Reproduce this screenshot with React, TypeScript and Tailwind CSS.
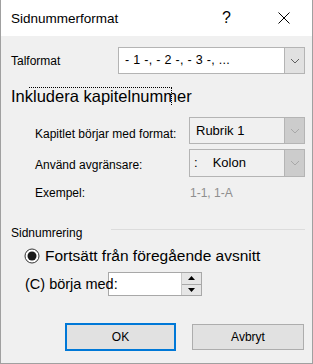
import React from 'react'

function Chevron({ color = '#606060' }: { color?: string }) {
  return (
    <svg width="10" height="6" viewBox="0 0 10 6" fill="none">
      <path d="M1 1 L5 5 L9 1" stroke={color} strokeWidth="1" />
    </svg>
  )
}

function Select({
  width,
  height,
  bg,
  btnBg,
  chevron,
  children,
}: {
  width: string
  height: string
  bg: string
  btnBg: string
  chevron: string
  children: React.ReactNode
}) {
  return (
    <div className={`flex border border-[#b4b4b4] ${width} ${height} ${bg}`}>
      <div className="flex-1 flex items-center">{children}</div>
      <div className={`w-[20px] flex items-center justify-center border-l border-[#b4b4b4] ${btnBg}`}>
        <Chevron color={chevron} />
      </div>
    </div>
  )
}

export default function App() {
  return (
    <div
      className="w-[313px] h-[364px] bg-[#f0f0f0] border-x border-b border-[#a0a0a0] flex flex-col text-black"
      style={{ fontFamily: '"Liberation Sans", Arial, sans-serif' }}
    >
      {/* Title bar */}
      <div className="h-[36px] bg-white flex items-center pl-[10px] shrink-0">
        <span className="text-[13.5px] leading-none pt-[1px]">Sidnummerformat</span>
        <span className="ml-auto text-[16px] leading-none mr-[47px]">?</span>
        <svg width="12" height="12" viewBox="0 0 12 12" className="mr-[22px]">
          <path d="M0.5 0.5 L11.5 11.5 M11.5 0.5 L0.5 11.5" stroke="#000" strokeWidth="1" />
        </svg>
      </div>

      <div className="flex flex-col">
        {/* Talformat */}
        <div className="mt-[11px] h-[27px] flex items-center">
          <span className="pl-[10px] w-[117px] text-[12px]">Talformat</span>
          <Select width="w-[187px]" height="h-[27px]" bg="bg-white" btnBg="bg-[#e1e1e1]" chevron="#606060">
            <span className="pl-[6px] text-[12.5px] tracking-[0.3px]">- 1 -, - 2 -, - 3 -, ...</span>
          </Select>
        </div>

        {/* Inkludera kapitelnummer */}
        <div className="relative mt-[13px] h-[19px]">
          <span className="pl-[10px] text-[16.5px] leading-[19px] block">Inkludera kapitelnummer</span>
          <div className="absolute left-[28px] top-0 w-[143px] h-[18px] border-t border-r border-dotted border-black" />
        </div>

        <div className="mt-[11px] h-[27px] flex items-center">
          <span className="pl-[34px] w-[188px] text-[12px] pt-[6px]">Kapitlet börjar med format:</span>
          <Select width="w-[116px]" height="h-[27px]" bg="bg-[#f0f0f0]" btnBg="bg-[#cccccc]" chevron="#a8a8a8">
            <span className="pl-[6px] text-[13px]">Rubrik 1</span>
          </Select>
        </div>

        <div className="mt-[5px] h-[28px] flex items-center">
          <span className="pl-[34px] w-[188px] text-[12px] pt-[4px]">Använd avgränsare:</span>
          <Select width="w-[116px]" height="h-[28px]" bg="bg-[#f0f0f0]" btnBg="bg-[#cccccc]" chevron="#a8a8a8">
            <span className="pl-[4px] text-[13px]">:</span>
            <span className="pl-[15px] text-[13px]">Kolon</span>
          </Select>
        </div>

        <div className="mt-[8px] h-[16px] flex items-center">
          <span className="pl-[34px] w-[189px] text-[12px]">Exempel:</span>
          <span className="text-[12px] text-[#8e8e8e]">1-1, 1-A</span>
        </div>

        {/* Sidnumrering */}
        <div className="mt-[24px] h-[16px] flex items-center">
          <span className="pl-[10px] text-[12px] w-[110px]">Sidnumrering</span>
          <div className="w-[194px] h-px bg-[#dcdcdc] -mt-[8px]" />
        </div>

        <div className="mt-[6px] h-[18px] flex items-center">
          <svg width="16" height="16" viewBox="0 0 16 16" className="ml-[23px]">
            <circle cx="8" cy="8" r="7" fill="#fff" stroke="#333" strokeWidth="1" />
            <circle cx="8" cy="8" r="4.5" fill="#1a1a1a" />
          </svg>
          <span className="ml-[5px] text-[15.5px]">Fortsätt från föregående avsnitt</span>
        </div>

        <div className="mt-[7px] h-[24px] relative flex items-center">
          <div className="ml-[107px] w-[94px] h-[24px] bg-white border border-[#a8a8a8] flex justify-end">
            <div className="w-[20px] flex flex-col border-l border-[#c8c8c8]">
              <div className="flex-1 bg-[#e6e6e6] flex items-center justify-center border-b border-[#a8a8a8]">
                <svg width="7" height="4" viewBox="0 0 7 4">
                  <path d="M0 4 L3.5 0 L7 4 Z" fill="#000" />
                </svg>
              </div>
              <div className="flex-1 bg-[#e6e6e6] flex items-center justify-center">
                <svg width="7" height="4" viewBox="0 0 7 4">
                  <path d="M0 0 L3.5 4 L7 0 Z" fill="#000" />
                </svg>
              </div>
            </div>
          </div>
          <span className="absolute left-[24px] top-[3px] text-[14.5px] leading-[18px]">(C) börja med:</span>
        </div>

        {/* Buttons */}
        <div className="mt-[27px] flex items-center">
          <button className="ml-[64px] w-[111px] h-[28px] border-2 border-[#0078d7] bg-[#e1e1e1] text-[12px]">
            OK
          </button>
          <button className="ml-[16px] w-[112px] h-[26px] border border-[#adadad] bg-[#e1e1e1] text-[12px]">
            Avbryt
          </button>
        </div>
      </div>
    </div>
  )
}
